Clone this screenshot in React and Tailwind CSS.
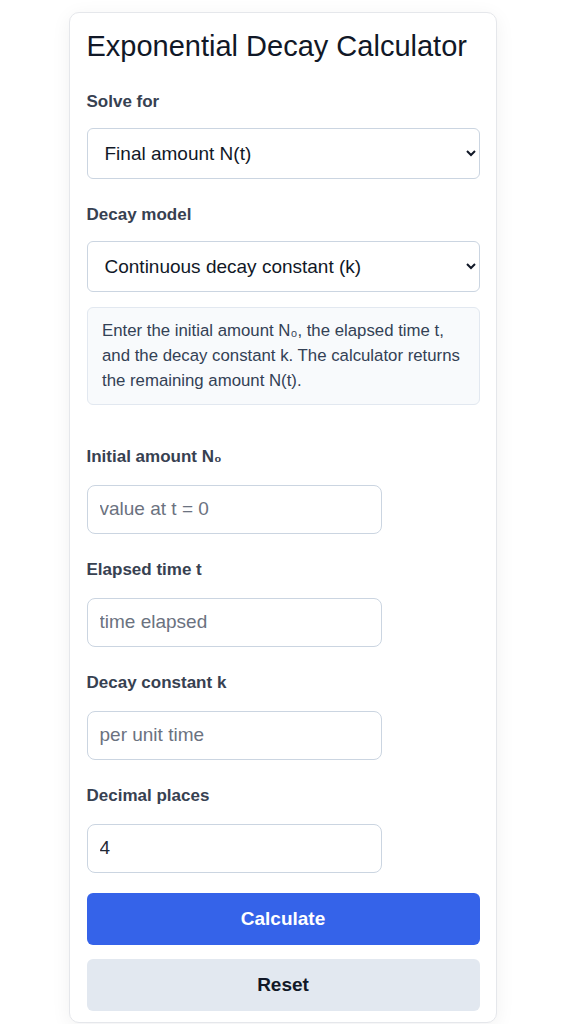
import { useState } from 'react';

const fieldLabel = 'block text-[17px] leading-5 font-bold text-[#374151] mb-[17.5px]';
const textInput =
  'block w-[295px] h-[49.5px] rounded-lg border border-[#cbd5e1] bg-white px-3 text-[19px] text-[#1f2937] placeholder:text-[#6b7280] outline-none';
const selectBox =
  'block w-full h-[51px] rounded-md border border-[#cbd5e1] bg-white pl-[13px] pr-2 text-[19px] text-[#111827] outline-none';

export default function App() {
  const [solveFor, setSolveFor] = useState('final');
  const [model, setModel] = useState('k');
  const [initial, setInitial] = useState('');
  const [elapsed, setElapsed] = useState('');
  const [constant, setConstant] = useState('');
  const [places, setPlaces] = useState('4');

  const reset = () => {
    setInitial('');
    setElapsed('');
    setConstant('');
    setPlaces('4');
  };

  return (
    <div className="min-h-screen bg-white pt-3 font-['Liberation_Sans',Arial,sans-serif]">
      {/* Card */}
      <div className="mx-auto w-[428px] rounded-[10px] border border-[#e5e7eb] bg-white px-[16.5px] pt-4 pb-[11px] shadow-[0_4px_20px_rgba(15,23,42,0.06)]">
        <h1 className="text-[29px] leading-[34px] font-normal text-[#111827] mb-[28.5px]">
          Exponential Decay Calculator
        </h1>

        <label className="block text-[17px] leading-5 font-bold text-[#374151] mb-[16.5px]">Solve for</label>
        <select value={solveFor} onChange={(e) => setSolveFor(e.target.value)} className={selectBox}>
          <option value="final">Final amount N(t)</option>
          <option value="initial">Initial amount N₀</option>
          <option value="time">Elapsed time t</option>
          <option value="rate">Decay constant k</option>
        </select>

        <label className="block text-[17px] leading-5 font-bold text-[#374151] mt-[25.5px] mb-[16.5px]">Decay model</label>
        <select value={model} onChange={(e) => setModel(e.target.value)} className={selectBox}>
          <option value="k">Continuous decay constant (k)</option>
          <option value="half">Half-life</option>
        </select>

        {/* Help text */}
        <div className="mt-[15px] rounded-md border border-[#e2e8f0] bg-[#f8fafc] px-[14.5px] pt-[10px] pb-[11px] text-[16.8px] leading-[25px] text-[#334155]">
          Enter the initial amount N₀, the elapsed time t, and the decay constant k. The calculator returns the remaining amount N(t).
        </div>

        <div className="mt-[42px]">
          <label className={fieldLabel}>Initial amount N₀</label>
          <input value={initial} onChange={(e) => setInitial(e.target.value)} placeholder="value at t = 0" className={textInput} />
        </div>

        <div className="mt-[26px]">
          <label className={fieldLabel}>Elapsed time t</label>
          <input value={elapsed} onChange={(e) => setElapsed(e.target.value)} placeholder="time elapsed" className={textInput} />
        </div>

        <div className="mt-[26px]">
          <label className={fieldLabel}>Decay constant k</label>
          <input value={constant} onChange={(e) => setConstant(e.target.value)} placeholder="per unit time" className={textInput} />
        </div>

        <div className="mt-[26px]">
          <label className={fieldLabel}>Decimal places</label>
          <input value={places} onChange={(e) => setPlaces(e.target.value)} className={textInput} />
        </div>

        <button className="mt-5 block w-full h-[52px] rounded-md bg-[#3563e9] text-[19px] font-bold text-white">
          Calculate
        </button>
        <button onClick={reset} className="mt-[14px] block w-full h-[52px] rounded-md bg-[#e2e8f0] text-[19px] font-bold text-[#111827]">
          Reset
        </button>
      </div>
    </div>
  );
}
